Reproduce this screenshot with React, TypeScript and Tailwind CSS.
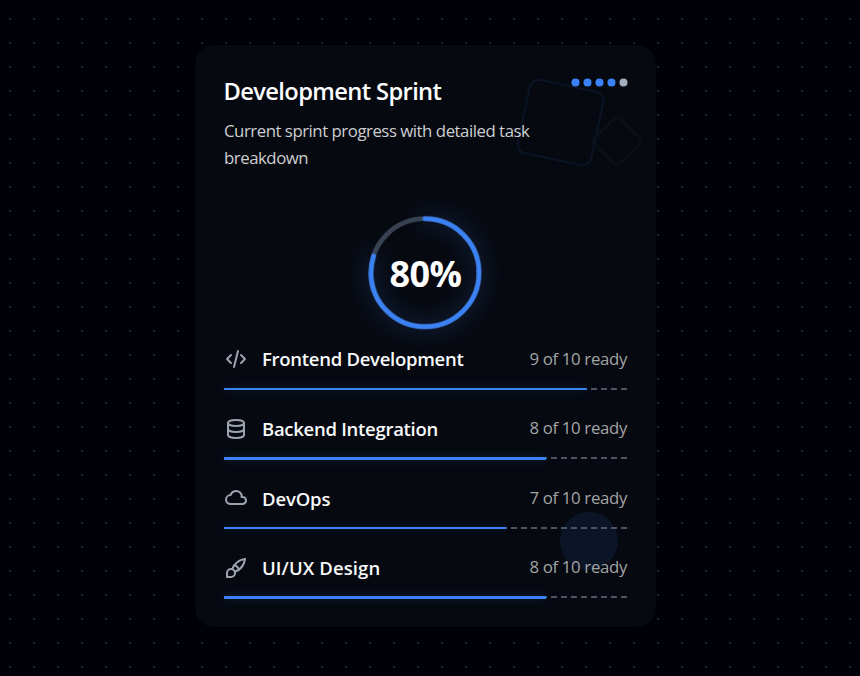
import React from "react";
import { TbBrush, TbCloud, TbCode, TbDatabase } from "react-icons/tb";

const tasks = [
  { name: "Frontend Development", done: 9, Icon: TbCode, row: "h-[70px]", bar: "h-[2px]", line: "mt-px", label: "mt-[2px] tracking-[-0.28px]", count: "mt-[2px]" },
  { name: "Backend Integration", done: 8, Icon: TbDatabase, row: "h-[69px]", bar: "h-[3px]", line: "mt-0", label: "mt-[2px] tracking-[-0.28px]", count: "mt-px" },
  { name: "DevOps", done: 7, Icon: TbCloud, row: "h-[70px]", bar: "h-[2px]", line: "mt-px", label: "mt-[3px] tracking-[-0.15px]", count: "mt-[2px]" },
  { name: "UI/UX Design", done: 8, Icon: TbBrush, row: "h-[46px]", bar: "h-[3px]", line: "mt-0", label: "mt-[2px] tracking-[0.1px]", count: "mt-px" },
];

export default function App() {
  return (
    <div className="h-[676px] w-[860px] overflow-hidden bg-[#000108] bg-[conic-gradient(from_90deg_at_22px_22px,#222529_90deg,transparent_0)] bg-size-[24px_24px] bg-position-[-13px_-4px] pt-[45px] pl-[195px] font-['Open_Sans','Noto_Sans',sans-serif]">
      <main className="relative h-[582px] w-[461px] overflow-hidden rounded-[19px] bg-[#060910] px-[29px] pt-[30px]">
        <div className="absolute top-[39px] left-[327px] size-[77px] rotate-12 rounded-[10px] border-2 border-[#0b1426]" />
        <div className="absolute top-[77px] left-[403px] size-[38px] rotate-45 rounded-[5px] border-2 border-[#0c101b]" />
        <div className="absolute top-[467px] left-[365px] size-[58px] rounded-full bg-[#0c1528]" />
        <header className="relative flex h-[141px] justify-between">
          <div>
            <h1 className="-ml-[0.5px] h-[42px] text-[23.7px] leading-8 font-semibold tracking-[-0.62px] whitespace-nowrap text-white">Development Sprint</h1>
            <p className="w-[330px] text-[16.8px] leading-[27px] tracking-[-0.47px] text-[#cecfd0]">Current sprint progress with detailed task breakdown</p>
          </div>
          <div className="flex translate-x-[0.5px] -translate-y-[0.5px] gap-1 pt-[4px]">
            {[0, 1, 2, 3, 4].map((n) => (
              <i key={n} className={`size-2 rounded-full ${n < 4 ? "bg-[#3b82f6]" : "bg-[#a0aec0]"}`} />
            ))}
          </div>
        </header>
        <section className="relative flex h-[127px] justify-center">
          <div className="relative h-[113px] w-[115px]">
            <svg width="115" height="113" viewBox="0 0 115 113" className="overflow-visible">
              <circle cx="57" cy="56.7" r="54" fill="none" stroke="#374151" strokeWidth="4.8" />
              <circle cx="57" cy="56.7" r="54" fill="none" stroke="#3b82f6" strokeWidth="4.8" strokeLinecap="round" strokeDasharray="80 20" pathLength="100" transform="rotate(-90 57 56.7)" className="[filter:drop-shadow(0_0_10px_rgba(59,130,246,0.45))]" />
            </svg>
            <strong className="absolute inset-x-0 top-0 flex h-[115px] items-center justify-center text-[36px] leading-none font-bold tracking-[-0.6px] text-white">80%</strong>
          </div>
        </section>
        <section className="relative">
          {tasks.map(({ name, done, Icon, row, bar, line, label, count }) => (
            <div key={name} className={row}>
              <div className="flex h-[44px] items-start">
                <Icon size={24} className="mt-1 mr-[14px] text-[#9ca3af]" />
                <h2 className={`text-[18.5px] leading-7 font-semibold whitespace-nowrap text-[#f8f9fa] ${label}`}>{name}</h2>
                <span className={`ml-auto text-[16.8px] leading-[27px] tracking-[-0.33px] whitespace-nowrap text-[#a3a4a5] ${count}`}>{done} of 10 ready</span>
              </div>
              <div className={`relative h-[3px] ${line}`}>
                <div className="h-[2px] bg-[repeating-linear-gradient(90deg,#4b5563_0,#4b5563_6px,transparent_6px,transparent_10px)] bg-position-[-3px_0]" />
                <div className={`absolute top-0 left-0 bg-[#3b82f6] shadow-[0_0_10px_rgba(59,130,246,0.3)] ${bar}`} style={{ width: `${done * 10}%` }} />
              </div>
            </div>
          ))}
        </section>
      </main>
    </div>
  );
}
